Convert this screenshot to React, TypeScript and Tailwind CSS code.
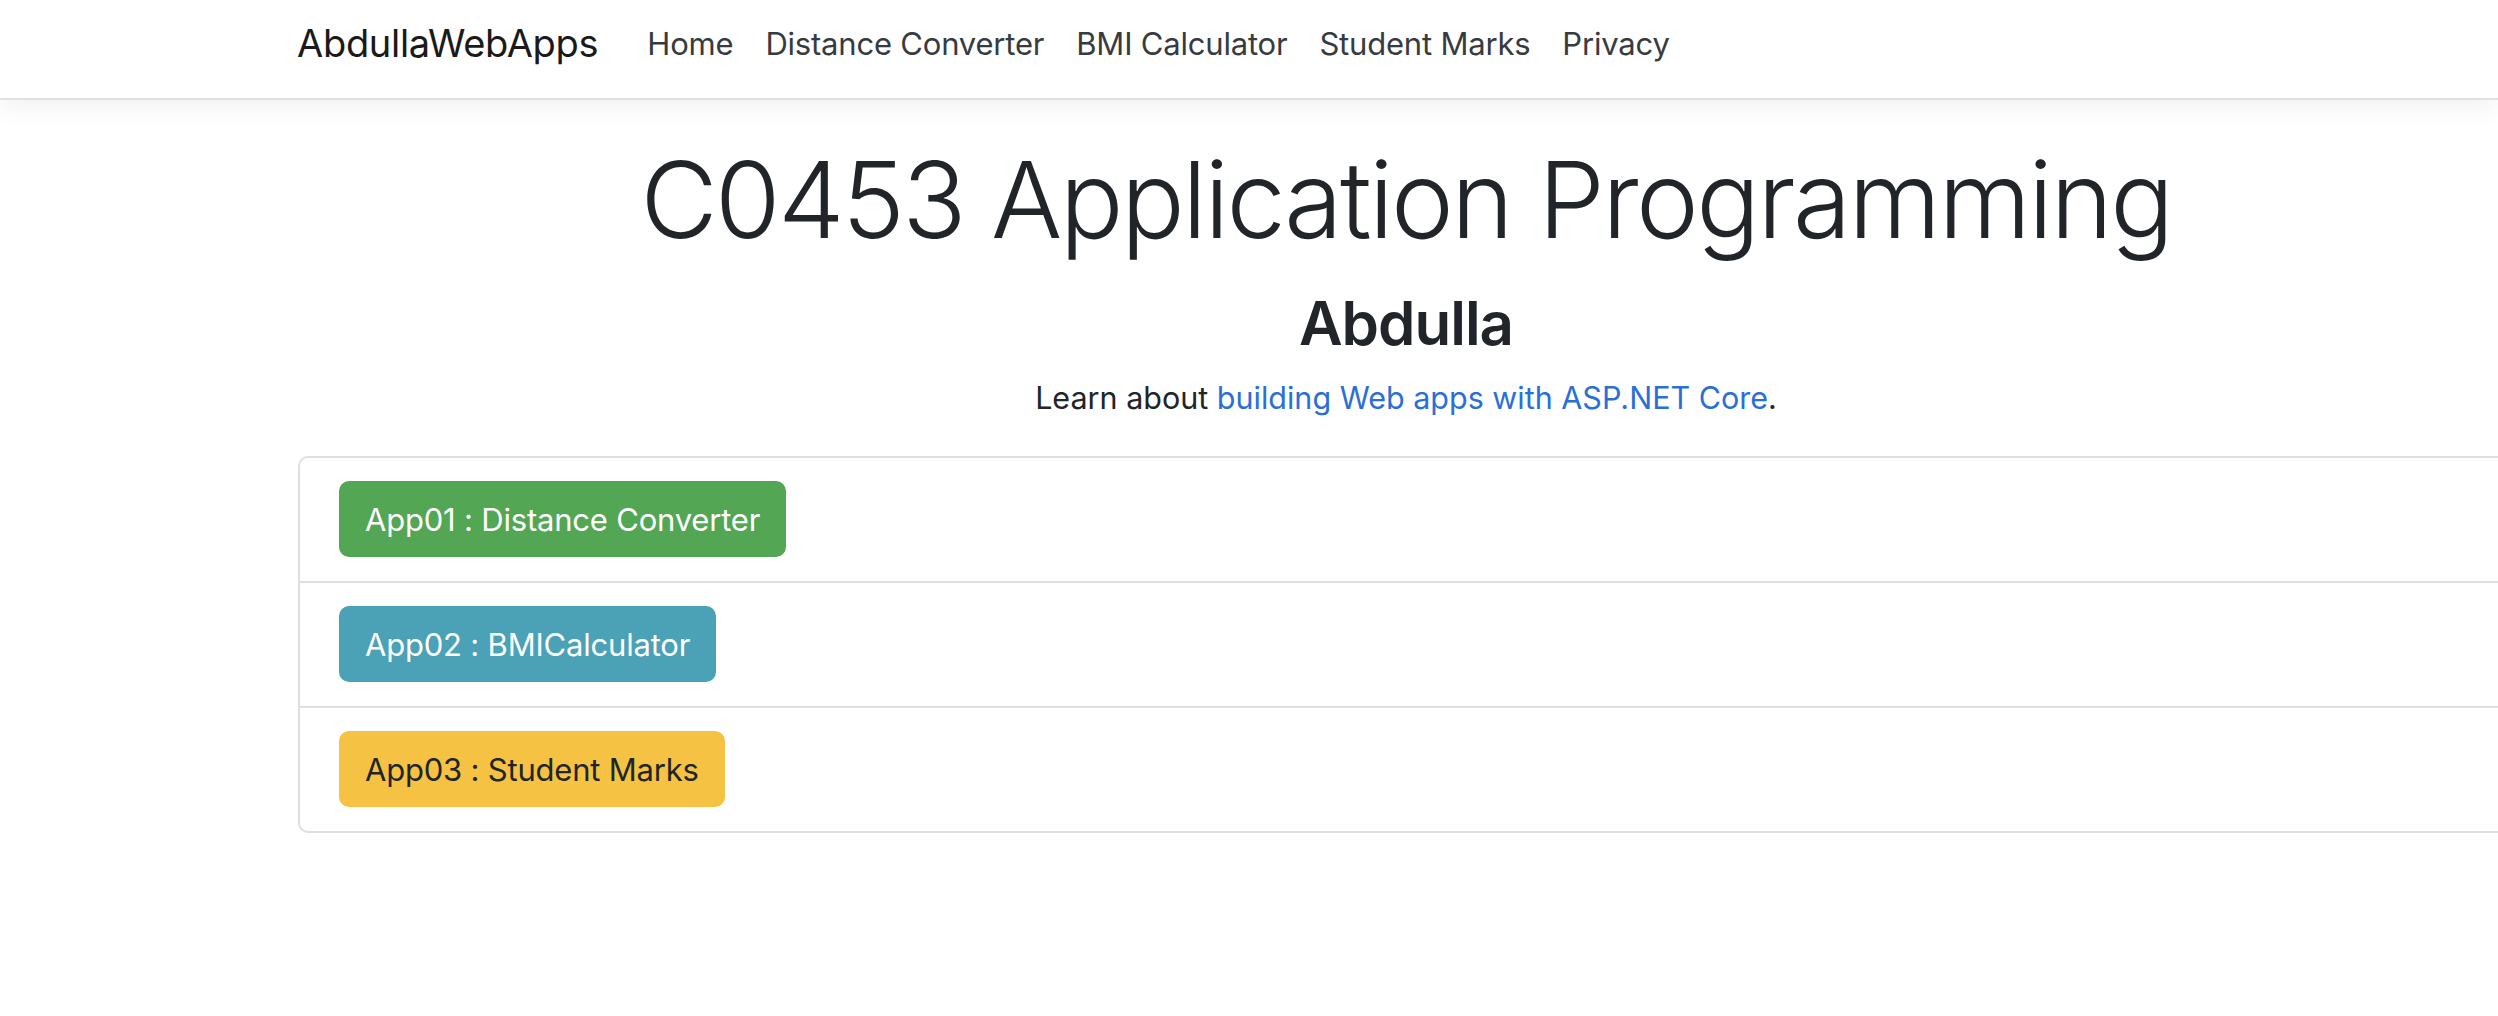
import React from 'react';

const navLinks = ['Home', 'Distance Converter', 'BMI Calculator', 'Student Marks', 'Privacy'];

const apps = [
  { label: 'App01 : Distance Converter', className: 'bg-[#53a653] text-white' },
  { label: 'App02 : BMICalculator', className: 'bg-[#4ba1b5] text-white' },
  { label: 'App03 : Student Marks', className: 'bg-[#f6c243] text-[#212529]' },
];

const App: React.FC = () => {
  return (
    <div className="w-full min-h-[1016px] overflow-hidden bg-white font-['Inter','Liberation_Sans',sans-serif] text-[#212529]">
      {/* Navbar */}
      <header className="bg-white border-b-2 border-[#dee2e6] shadow-[0_8px_24px_rgba(0,0,0,0.05)]">
        <nav className="pl-[297px] h-[98px] pb-[12px] flex items-center">
          <a className="text-[38px] leading-none text-[#1a1a1a] tracking-[-0.3px] mr-[33px]">AbdullaWebApps</a>
          <ul className="flex items-center">
            {navLinks.map((link) => (
              <li key={link}>
                <a className="block px-4 text-[31px] leading-none text-[#373b3f] tracking-[-0.2px]">{link}</a>
              </li>
            ))}
          </ul>
        </nav>
      </header>

      {/* Main */}
      <main className="ml-[298px] w-[2216px]">
        <div className="text-center pt-[36px]">
          <h1 className="text-[106px] leading-[1.2] font-light tracking-[-2.6px]">C0453 Application Programming</h1>
          <h2 className="mt-[24px] text-[60px] leading-[1.2] font-semibold tracking-[-1px]">Abdulla</h2>
          <p className="mt-[15px] text-[30.5px] leading-[48px]">
            Learn about <a className="text-[#2b6fd6]">building Web apps with ASP.NET Core</a>.
          </p>
        </div>

        {/* App list */}
        <div className="mt-[34px] border-2 border-[#dfdfdf] rounded-[10px]">
          {apps.map((app, i) => (
            <div
              key={app.label}
              className={`pl-[39px] pt-[23px] pb-6 ${i > 0 ? 'border-t-2 border-[#dfdfdf]' : ''}`}
            >
              <button
                className={`h-[76px] px-[26px] rounded-[10px] text-[31px] leading-none tracking-[-0.2px] ${app.className}`}
              >
                {app.label}
              </button>
            </div>
          ))}
        </div>
      </main>
    </div>
  );
};

export default App;
